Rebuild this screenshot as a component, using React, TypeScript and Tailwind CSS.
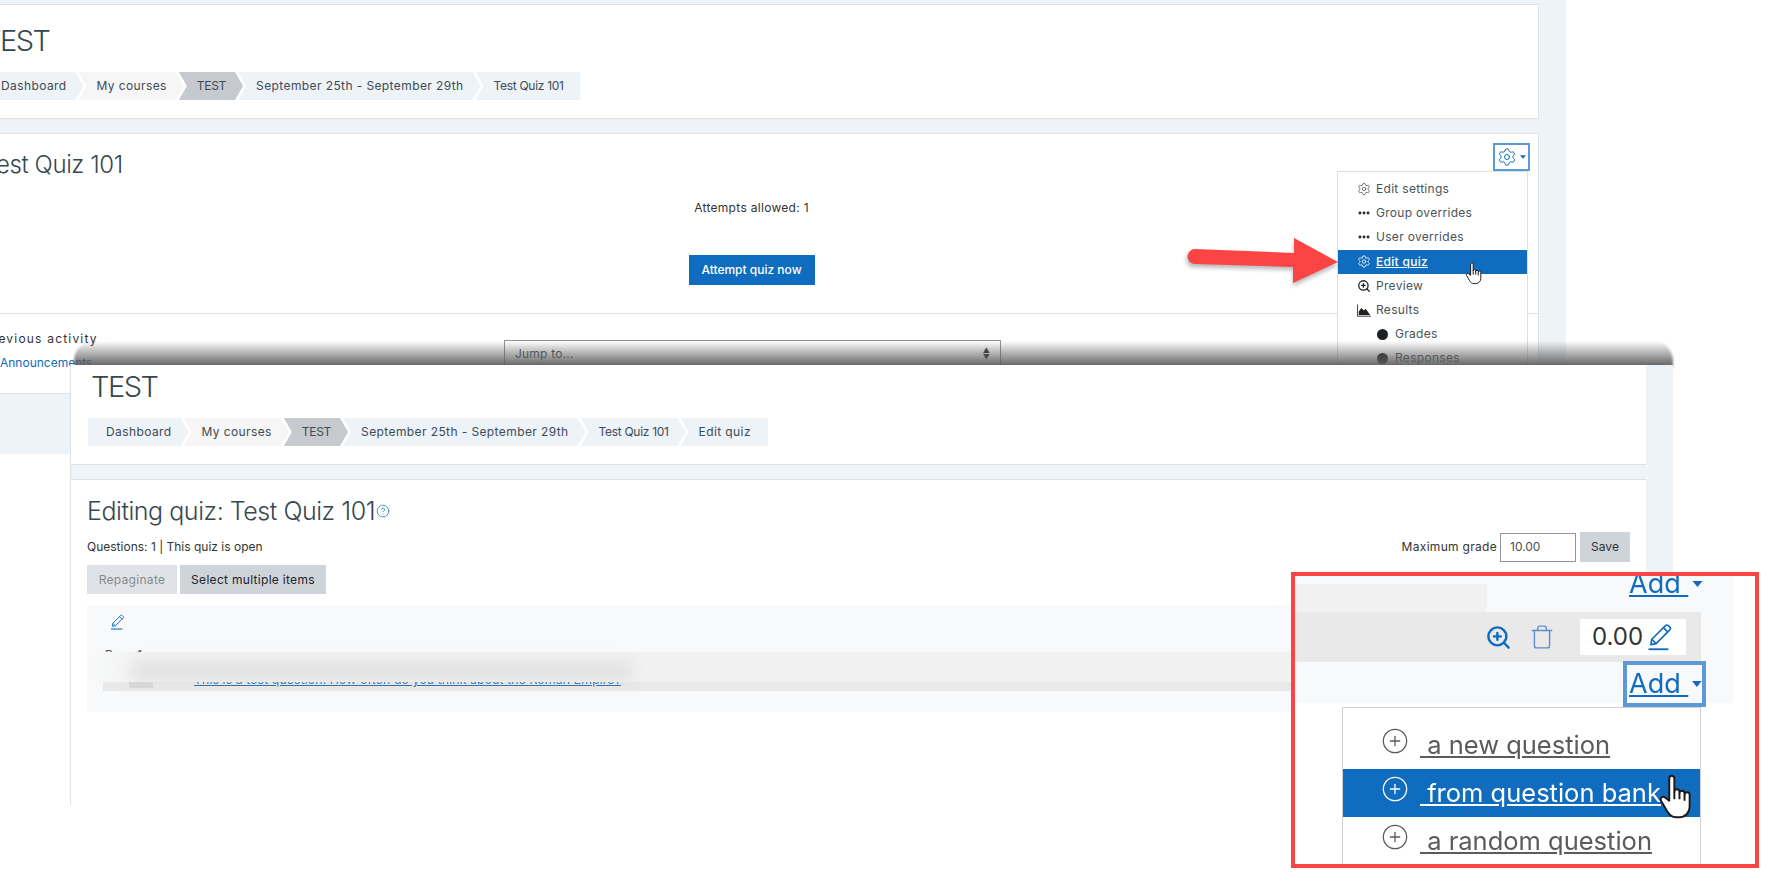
import { CircleHelp, CirclePlus, Ellipsis, Settings, Trash, ZoomIn } from "lucide-react";

const pageFont = "[font-family:Inter,'Noto_Sans',sans-serif]";

interface CrumbProps {
  label: string;
  tone?: "light" | "pale" | "dark";
  tight?: boolean;
  first?: boolean;
  last?: boolean;
}

const Crumb = ({ label, tone = "light", tight, first, last }: CrumbProps) => {
  const toneClass =
    tone === "dark"
      ? "bg-[#c6c9ce] text-[#3e4a55]"
      : tone === "pale"
        ? "bg-[#f6f6f6] text-[#3e4a55]"
        : "bg-[#edf3f7] text-[#3e4a55]";
  let shape = "[clip-path:polygon(0_0,calc(100%-8px)_0,100%_50%,calc(100%-8px)_100%,0_100%,8px_50%)]";
  if (first) shape = "rounded-l-[3px] [clip-path:polygon(0_0,calc(100%-8px)_0,100%_50%,calc(100%-8px)_100%,0_100%)]";
  if (last) shape = "rounded-r-[3px] [clip-path:polygon(0_0,100%_0,100%_100%,0_100%,8px_50%)]";
  return (
    <span
      className={`h-[28px] flex items-center pl-[18px] pr-[17px] text-[12px] whitespace-nowrap ${tight ? "tracking-[-0.3px]" : "tracking-[0.4px]"} ${first ? "" : "-ml-[5px]"} ${toneClass} ${shape}`}
    >
      {label}
    </span>
  );
};

const Breadcrumb = ({ items }: { items: CrumbProps[] }) => (
  <div className="flex items-center">
    {items.map((item, i) => (
      <Crumb key={item.label} {...item} first={i === 0} last={i === items.length - 1} />
    ))}
  </div>
);

const baseCrumbs: CrumbProps[] = [
  { label: "Dashboard" },
  { label: "My courses", tone: "pale" },
  { label: "TEST", tone: "dark", tight: true },
  { label: "September 25th - September 29th" },
  { label: "Test Quiz 101", tight: true },
];

const Caret = ({ className }: { className: string }) => (
  <svg viewBox="0 0 10 6" className={className}>
    <path d="M0 0h10L5 6z" fill="#0f6cbf" />
  </svg>
);

const ResultsIcon = () => (
  <svg viewBox="0 0 16 14" className="w-[15px] h-[13px] text-[#1d2125]">
    <path d="M.5 0v13.5H16" fill="none" stroke="currentColor" />
    <path d="M2 12V8l3-4 3 3 2-2 5 7z" fill="currentColor" />
  </svg>
);

const PencilLine = ({ className }: { className: string }) => (
  <svg viewBox="0 0 24 24" fill="none" stroke="#0f6cbf" strokeWidth="1.4" strokeLinejoin="round" className={className}>
    <path d="M5 18.5l.8-4.6L17.6 2.2a1.6 1.6 0 0 1 2.3 0l1.4 1.4a1.6 1.6 0 0 1 0 2.3L9.5 17.7z" />
    <path d="M5.8 13.9l3.7 3.8M15.8 4l3.8 3.8" />
    <path d="M3 22.5h17" strokeWidth="1.6" />
  </svg>
);

const HandCursor = ({ className }: { className: string }) => (
  <svg viewBox="0 0 24 31" className={className} fill="#fff" stroke="#1a1a1a" strokeWidth="1.3" strokeLinejoin="round">
    <path d="M7.5 3a1.7 1.7 0 0 1 3.4 0v9a1.7 1.7 0 0 1 3.4 0v1a1.7 1.7 0 0 1 3.4 0v1a1.7 1.7 0 0 1 3.4 0v8c0 4-3 7-7 7h-2c-3 0-4.5-1.500-6-4L2 18c-1-2 1.500-3.500 3-2l2.500 2z" />
    <path d="M10.900 12v5M14.300 13v4M17.700 14v4" fill="none" />
  </svg>
);

const MenuRow = ({ icon, label, active }: { icon: React.ReactNode; label: string; active?: boolean }) => (
  <div
    className={`h-[24.2px] flex items-center gap-[5px] pl-[19px] text-[12px] tracking-[0.3px] ${active ? "bg-[#0f6cbf] text-white" : "text-[#4a5258]"}`}
  >
    <span className="w-[14px] flex justify-center">{icon}</span>
    <span className={active ? "underline font-medium" : ""}>{label}</span>
  </div>
);

const SubRow = ({ label }: { label: string }) => (
  <div className="h-[24.2px] flex items-center gap-[7px] pl-[39px] text-[12px] tracking-[0.3px] text-[#4a5258]">
    <span className="w-[11px] h-[11px] rounded-full bg-[#1d2125]" />
    {label}
  </div>
);

const QuizMenu = () => (
  <div className="absolute left-[1372px] top-[37px] w-[191px] h-[240px] bg-white border border-[#dcdfe3] pt-[5px]">
    <MenuRow icon={<Settings size={14} strokeWidth={1.2} className="text-[#444]" />} label="Edit settings" />
    <MenuRow icon={<Ellipsis size={14} strokeWidth={3} className="text-[#1d2125]" />} label="Group overrides" />
    <MenuRow icon={<Ellipsis size={14} strokeWidth={3} className="text-[#1d2125]" />} label="User overrides" />
    <MenuRow active icon={<Settings size={15} strokeWidth={1.4} className="text-white" />} label="Edit quiz" />
    <MenuRow icon={<ZoomIn size={14} strokeWidth={2.2} className="text-[#1d2125]" />} label="Preview" />
    <MenuRow icon={<ResultsIcon />} label="Results" />
    <SubRow label="Grades" />
    <SubRow label="Responses" />
  </div>
);

const BackPage = () => (
  <div className="-ml-[36px] w-[1602px] h-[454px] bg-[#edf3f7] pt-[4px] pr-[27px]">
    <div className="h-[115px] bg-white border border-[#dee2e6] pl-[18px] pt-[18px]">
      <h1 className="text-[29px] tracking-[-1.5px] leading-[36px] font-light text-[#37474f] mb-[13px]">TEST</h1>
      <Breadcrumb items={baseCrumbs} />
    </div>
    <div className="relative mt-[14px] h-[261px] bg-white border border-[#dee2e6]">
      <div className="h-[37px] flex justify-between items-start pl-[18px] pr-[8px] pt-[9px]">
        <h2 className="mt-[7px] text-[24px] tracking-[-0.4px] leading-[30px] font-light text-[#37474f]">Test Quiz 101</h2>
        <div className="w-[37px] h-[28px] border-2 border-[#5c9ad6] flex items-center gap-[3px] pl-[2px]">
          <Settings size={20} strokeWidth={1.2} className="text-[#0f6cbf]" />
          <Caret className="w-[6px] h-[4px]" />
        </div>
      </div>
      <p className="mt-[28px] text-center text-[12px] tracking-[0.3px] leading-[18px] text-[#333]">Attempts allowed: 1</p>
      <div className="mt-[38px] flex justify-center">
        <span className="w-[126px] h-[30px] bg-[#0f6cbf] text-white text-[12px] font-medium flex items-center justify-center">
          Attempt quiz now
        </span>
      </div>
      <div className="mt-[28px] border-t border-[#dee2e6] flex pl-[19px]">
        <div className="w-[520px] pt-[16px] text-[12px] leading-[18px]">
          <p className="tracking-[1.2px] text-[#333]">Previous activity</p>
          <p className="mt-[6px] pl-[16px] text-[#0f6cbf]">Announcements</p>
        </div>
        <div className="mt-[26px] w-[497px] h-[36px] border border-[#8f959e] flex items-start justify-between px-[10px] pt-[4px] text-[12px] tracking-[0.2px] text-[#495057]">
          Jump to...
          <span className="text-[7px] leading-[7px] mt-[2px] text-[#333]">
            ▲
            <br />
            ▼
          </span>
        </div>
      </div>
      <QuizMenu />
    </div>
  </div>
);

const RedArrow = () => (
  <svg viewBox="0 0 160 60" className="absolute left-[1183px] top-[232px] w-[160px] h-[60px]">
    <path
      d="M9 17.500L111 21V6l44 24-45 21V35L9 32a7.500 7.500 0 0 1 0-14.500z"
      fill="#000"
      opacity="0.28"
      transform="translate(0 3)"
      className="blur-[2px]"
    />
    <path d="M12 17L111 21V6l44 24-45 21V35L12 32a7.500 7.500 0 0 1 0-15z" fill="#fb4444" />
  </svg>
);

const FrontPage = () => (
  <>
    <div className="absolute left-[74px] top-[341px] w-[1599px] h-[26px] rounded-t-[20px] bg-gradient-to-b from-transparent to-[#5c5c5c] blur-[1px]" />
    <div className="absolute left-[70px] top-[365px] w-[1603px] h-[440px] bg-[#edf3f7] pr-[27px] border-l border-[#dee2e6]">
      <div className="h-[100px] bg-white border-b border-[#dee2e6] pl-[17px] pt-[4px]">
        <h1 className="pl-[3px] text-[29px] tracking-[-1.5px] leading-[36px] font-light text-[#37474f] mb-[13px]">TEST</h1>
        <Breadcrumb items={[...baseCrumbs, { label: "Edit quiz" }]} />
      </div>
      <div className="relative mt-[14px] h-[326px] bg-white border-t border-[#dee2e6] px-[16px] pt-[15px]">
        <div className="flex items-center gap-[1px]">
          <h2 className="text-[25px] tracking-[-0.45px] leading-[32px] font-light text-[#37474f]">Editing quiz: Test Quiz 101</h2>
          <CircleHelp size={14} strokeWidth={1.2} className="text-[#0f6cbf]" />
        </div>
        <div className="mt-[5px] h-[30px] flex items-center justify-between text-[12px] text-[#333]">
          <span>Questions: 1 | This quiz is open</span>
          <div className="flex items-center gap-[3px]">
            <span className="tracking-[0.3px]">Maximum grade</span>
            <span className="w-[76px] h-[29px] border border-[#8f959e] flex items-center pl-[9px] text-[#495057]">10.00</span>
            <span className="w-[50px] h-[30px] ml-[1px] bg-[#ced4da] flex items-center justify-center text-[#333]">Save</span>
          </div>
        </div>
        <div className="mt-[3px] flex gap-[3px] text-[12px] tracking-[0.3px]">
          <span className="w-[90px] h-[29px] bg-[#dfe2e6] text-[#858b91] flex items-center justify-center">Repaginate</span>
          <span className="w-[146px] h-[29px] bg-[#ced4da] text-[#212529] flex items-center justify-center">Select multiple items</span>
        </div>
        <div className="mt-[11px] h-[107px] bg-[#f8f9fa] overflow-hidden pl-[16px] pt-[9px]">
          <PencilLine className="ml-[6px] w-[16px] h-[16px]" />
          <p className="mt-[18px] ml-[2px] text-[12px] leading-[14px] text-[#495057]">Page 1</p>
          <div className="mt-[1px] h-[28px] bg-[#e9e9e9] flex items-end pl-[26px] pb-[4px]">
            <span className="w-[24px] h-[9px] -mb-[1px] bg-[#d6d6d6]" />
            <span className="ml-[41px] text-[12.5px] leading-[14px] underline text-[#0f5fa8] blur-[0.5px]">
              This is a test question. How often do you think about the Roman Empire?
            </span>
          </div>
        </div>
        <div className="absolute left-[20px] top-[172px] w-[1210px] h-[30px] bg-gradient-to-r from-[#f8f9fa] to-[#f1f1f1] to-[5%]" />
        <div className="absolute left-[60px] top-[184px] w-[500px] h-[14px] bg-[#dcdcdc] blur-[8px]" />
      </div>
    </div>
  </>
);

const ChoiceRow = ({ label, active }: { label: string; active?: boolean }) => (
  <div className={`h-[48px] flex items-center pl-[38px] ${active ? "bg-[#0f6cbf] text-white" : "text-[#5b5b5b]"}`}>
    <CirclePlus size={28} strokeWidth={1.1} className="-mt-[8px]" />
    <span className="ml-[11px] text-[25.5px] leading-[30px] underline whitespace-pre">{` ${label}`}</span>
  </div>
);

const AddLink = () => (
  <>
    <span className="text-[27px] leading-[32px] text-[#0f6cbf] underline whitespace-pre">Add </span>
    <Caret className="w-[11px] h-[6px] ml-[4px]" />
  </>
);

const Callout = () => (
  <div className="absolute left-[1291px] top-[572px] w-[468px] h-[296px] border-4 border-[#fb4444] bg-white overflow-hidden">
    <div className="relative h-[127px] w-[438px] bg-[#f8f9fa] blur-[0.4px]">
      <div className="h-[36px] pl-[334px] flex items-center -translate-y-[10px]">
        <AddLink />
      </div>
      <div className="absolute left-0 top-[8px] w-[192px] h-[78px] bg-[#f1f1f1]" />
      <div className="relative w-[406px] h-[50px] bg-[#e9e9e9] flex items-center pl-[190px]">
        <ZoomIn size={27} strokeWidth={2.2} className="text-[#0f6cbf]" />
        <Trash size={26} strokeWidth={1.3} className="ml-[17px] text-[#5e8fc9]" />
        <div className="ml-[25px] w-[106px] h-[36px] bg-white flex items-center pl-[12px]">
          <span className="text-[24px] text-[#333]">0.00</span>
          <PencilLine className="ml-[2px] w-[28px] h-[28px]" />
        </div>
      </div>
      <div className="relative ml-[328px] -mt-[1px] w-[83px] h-[46px] border-4 border-[#5c9ad6] flex items-center pl-[2px]">
        <AddLink />
      </div>
    </div>
    <div className="mt-[4px] ml-[47px] w-[359px] border border-b-0 border-[#d0d0d0] pt-[13px] blur-[0.4px]">
      <ChoiceRow label="a new question" />
      <ChoiceRow active label="from question bank" />
      <ChoiceRow label="a random question" />
    </div>
    <HandCursor className="absolute left-[363px] top-[196px] w-[36px] h-[50px]" />
  </div>
);

export default function App() {
  return (
    <div className={`relative w-[1773px] h-[883px] overflow-hidden bg-white ${pageFont}`}>
      <BackPage />
      <RedArrow />
      <HandCursor className="absolute left-[1465px] top-[261px] w-[18px] h-[25px]" />
      <FrontPage />
      <Callout />
    </div>
  );
}
